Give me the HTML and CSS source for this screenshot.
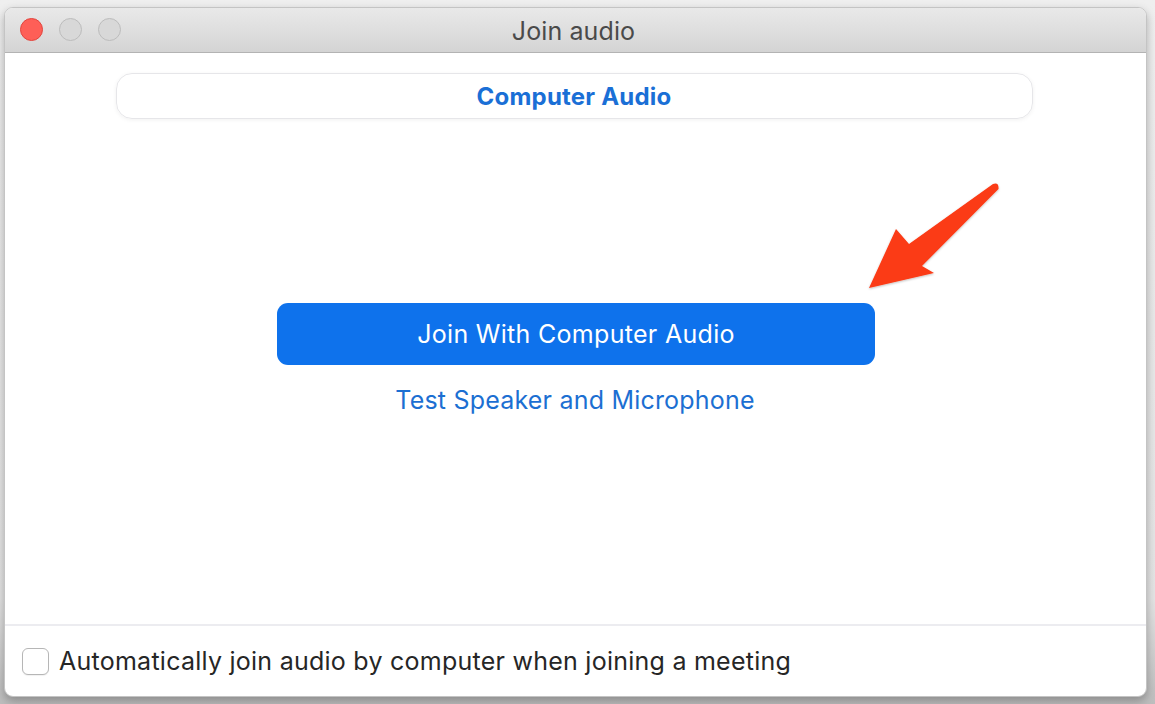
FILE: index.html
```html
<!DOCTYPE html>
<html lang="en">
<head>
    <meta charset="UTF-8">
    <title>Join audio</title>
    <link rel="stylesheet" href="styles.css">
</head>
<body>
    <div class="window">
        <div class="titlebar">
            <div class="lights">
                <span class="light red"></span>
                <span class="light"></span>
                <span class="light"></span>
            </div>
            <div class="title">Join audio</div>
        </div>
        <main class="content">
            <div class="tabs">
                <span class="tab-active">Computer Audio</span>
            </div>
            <div class="actions">
                <button class="join-btn">Join With Computer Audio</button>
                <a class="test-link" href="#">Test Speaker and Microphone</a>
            </div>
        </main>
        <footer class="footer">
            <label class="auto-join">
                <span class="checkbox"></span>
                Automatically join audio by computer when joining a meeting
            </label>
        </footer>
        <svg class="arrow" width="160" height="130" viewBox="850 170 160 130">
            <defs>
                <filter id="sh" x="-20%" y="-20%" width="140%" height="140%">
                    <feDropShadow dx="0" dy="1" stdDeviation="1.2" flood-color="#000" flood-opacity="0.25"/>
                </filter>
            </defs>
            <path filter="url(#sh)" fill="#fb3a14"
                  d="M868 287 L895 228 L908 243 L992 183 Q998 181 997.5 188 L921 265 L933 272 Z"/>
        </svg>
    </div>
</body>
</html>
```

FILE: styles.css
```css
html, body {
    margin: 0;
    padding: 0;
}
body {
    width: 1155px;
    height: 704px;
    background: linear-gradient(#efefef, #e4e4e4 85%, #bdbdbd);
    font-family: Inter, "Noto Sans", sans-serif;
    overflow: hidden;
}
.window {
    position: relative;
    box-sizing: border-box;
    margin: 7px 0 0 4px;
    width: 1143px;
    height: 690px;
    background: #fff;
    border: 1px solid #c4c4c4;
    border-radius: 9px;
    box-shadow: 0 4px 10px rgba(0, 0, 0, 0.28);
    display: flex;
    flex-direction: column;
    overflow: hidden;
}
.titlebar {
    position: relative;
    height: 44px;
    flex: none;
    background: linear-gradient(#e9e9e9, #d4d4d4);
    border-bottom: 1px solid #b3b3b3;
    display: flex;
    align-items: center;
    justify-content: center;
}
.lights {
    position: absolute;
    left: 15px;
    top: 10px;
    display: flex;
    gap: 16px;
}
.light {
    width: 23px;
    height: 23px;
    border-radius: 50%;
    background: #d8d8d8;
    border: 1px solid #bcbcbc;
    box-sizing: border-box;
}
.light.red {
    background: #fe5f57;
    border-color: #e3453e;
}
.title {
    font-size: 25px;
    letter-spacing: 0.1px;
    color: #4a4a4a;
    margin-left: -4px;
    padding-top: 2px;
}
.content {
    flex: 1;
    display: flex;
    flex-direction: column;
    align-items: center;
}
.tabs {
    margin-top: 20px;
    margin-right: 3px;
    width: 917px;
    height: 46px;
    box-sizing: border-box;
    border: 1px solid #e6e6e9;
    border-radius: 16px;
    box-shadow: 0 1px 4px rgba(0, 0, 0, 0.06);
    display: flex;
    align-items: center;
    justify-content: center;
}
.tab-active {
    color: #1a6fd6;
    font-weight: 700;
    font-size: 24px;
    letter-spacing: 0.2px;
}
.actions {
    margin-top: 184px;
    display: flex;
    flex-direction: column;
    align-items: center;
    gap: 20px;
}
.join-btn {
    width: 598px;
    height: 62px;
    border: none;
    border-radius: 11px;
    background: #0e72ec;
    color: #fff;
    font-family: inherit;
    font-size: 25px;
    letter-spacing: 0.3px;
    margin-left: 1px;
}
.test-link {
    color: #1c6fd2;
    text-decoration: none;
    font-size: 25px;
    letter-spacing: 0.2px;
    margin-left: -1px;
}
.footer {
    height: 70px;
    flex: none;
    border-top: 2px solid #ececf0;
    display: flex;
    align-items: center;
    padding-left: 17px;
}
.auto-join {
    display: flex;
    align-items: center;
    gap: 10px;
    font-size: 25px;
    letter-spacing: 0.25px;
    color: #262626;
}
.checkbox {
    width: 27px;
    height: 27px;
    box-sizing: border-box;
    border: 1px solid #b6b6b6;
    border-radius: 6px;
    background: #fff;
    box-shadow: 0 1px 1px rgba(0, 0, 0, 0.06);
}
.arrow {
    position: absolute;
    left: 846px;
    top: 163px;
}
```
